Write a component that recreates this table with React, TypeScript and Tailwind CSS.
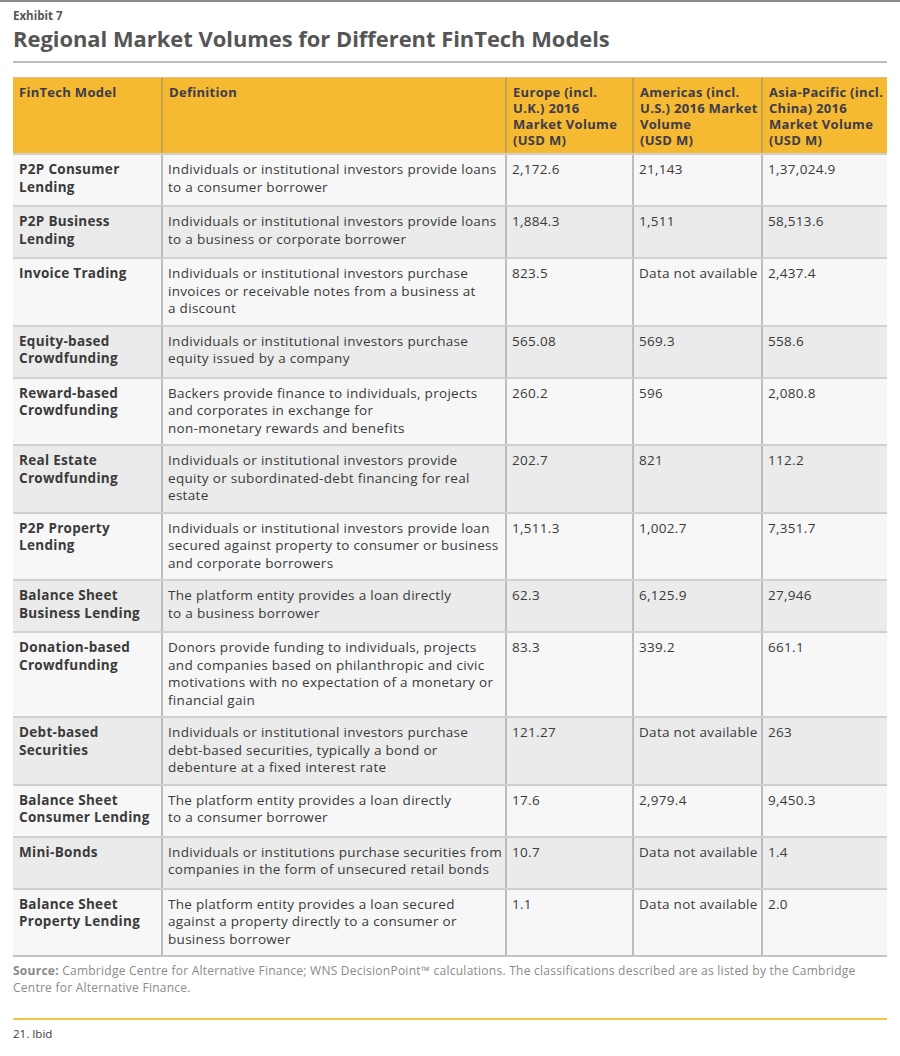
const rows: { model: string[]; def: string[]; eu: string; am: string; ap: string }[] = [
  { model: ["P2P Consumer", "Lending"], def: ["Individuals or institutional investors provide loans", "to a consumer borrower"], eu: "2,172.6", am: "21,143", ap: "1,37,024.9" },
  { model: ["P2P Business", "Lending"], def: ["Individuals or institutional investors provide loans", "to a business or corporate borrower"], eu: "1,884.3", am: "1,511", ap: "58,513.6" },
  { model: ["Invoice Trading"], def: ["Individuals or institutional investors purchase", "invoices or receivable notes from a business at", "a discount"], eu: "823.5", am: "Data not available", ap: "2,437.4" },
  { model: ["Equity-based", "Crowdfunding"], def: ["Individuals or institutional investors purchase", "equity issued by a company"], eu: "565.08", am: "569.3", ap: "558.6" },
  { model: ["Reward-based", "Crowdfunding"], def: ["Backers provide finance to individuals, projects", "and corporates in exchange for", "non-monetary rewards and benefits"], eu: "260.2", am: "596", ap: "2,080.8" },
  { model: ["Real Estate", "Crowdfunding"], def: ["Individuals or institutional investors provide", "equity or subordinated-debt financing for real", "estate"], eu: "202.7", am: "821", ap: "112.2" },
  { model: ["P2P Property", "Lending"], def: ["Individuals or institutional investors provide loan", "secured against property to consumer or business", "and corporate borrowers"], eu: "1,511.3", am: "1,002.7", ap: "7,351.7" },
  { model: ["Balance Sheet", "Business Lending"], def: ["The platform entity provides a loan directly", "to a business borrower"], eu: "62.3", am: "6,125.9", ap: "27,946" },
  { model: ["Donation-based", "Crowdfunding"], def: ["Donors provide funding to individuals, projects", "and companies based on philanthropic and civic", "motivations with no expectation of a monetary or", "financial gain"], eu: "83.3", am: "339.2", ap: "661.1" },
  { model: ["Debt-based", "Securities"], def: ["Individuals or institutional investors purchase", "debt-based securities, typically a bond or", "debenture at a fixed interest rate"], eu: "121.27", am: "Data not available", ap: "263" },
  { model: ["Balance Sheet", "Consumer Lending"], def: ["The platform entity provides a loan directly", "to a consumer borrower"], eu: "17.6", am: "2,979.4", ap: "9,450.3" },
  { model: ["Mini-Bonds"], def: ["Individuals or institutions purchase securities from", "companies in the form of unsecured retail bonds"], eu: "10.7", am: "Data not available", ap: "1.4" },
  { model: ["Balance Sheet", "Property Lending"], def: ["The platform entity provides a loan secured", "against a property directly to a consumer or", "business borrower"], eu: "1.1", am: "Data not available", ap: "2.0" },
];

const headers: string[][] = [
  ["FinTech Model"],
  ["Definition"],
  ["Europe (incl.", "U.K.) 2016", "Market Volume", "(USD M)"],
  ["Americas (incl.", "U.S.) 2016 Market", "Volume", "(USD M)"],
  ["Asia-Pacific (incl.", "China) 2016", "Market Volume", "(USD M)"],
];

const widths = ["w-[148px]", "w-[344px]", "w-[127px]", "w-[129px]", "w-[124px]"];

function Lines({ lines }: { lines: string[] }) {
  return (
    <>
      {lines.map((l, i) => (
        <div key={i} className="whitespace-nowrap">
          {l}
        </div>
      ))}
    </>
  );
}

export default function App() {
  return (
    <div
      className="w-[900px] h-[1056px] bg-white border-t-2 border-[#8c8c8c] text-[#3a3a3a]"
      style={{ fontFamily: '"Open Sans", "Liberation Sans", sans-serif' }}
    >
      <div className="mx-[13px]">
        <div className="pt-[6px] text-[11.5px] leading-[16px] font-bold text-[#555]">Exhibit 7</div>
        <h1 className="mt-[1px] text-[21.9px] font-bold leading-[28px] text-[#555] pb-[8px] border-b-2 border-[#bdbdbd]">
          Regional Market Volumes for Different FinTech Models
        </h1>

        <div className="mt-[14px] text-[13.5px] tracking-[0.3px] leading-[17.5px]">
          {/* header */}
          <div className="flex bg-[#f6b932] border-t border-[#d8c08a] font-bold text-[#3c3c4a] text-[13px] h-[76px]">
            {headers.map((h, i) => (
              <div
                key={i}
                className={`${widths[i]} pl-[6px] pt-[6px] leading-[16px] ${i > 0 ? "border-l-2 border-[#c4a24e]" : ""}`}
              >
                <Lines lines={h} />
              </div>
            ))}
          </div>

          {rows.map((r, idx) => (
            <div
              key={idx}
              className={`flex min-h-[52px] border-t-2 border-[#d0d0d0] ${idx % 2 === 0 ? "bg-[#f7f7f7]" : "bg-[#ebebeb]"}`}
            >
              <div className={`${widths[0]} pl-[6px] pt-[6px] pb-[7px] font-bold`}>
                <Lines lines={r.model} />
              </div>
              <div className={`${widths[1]} pl-[5px] pt-[6px] pb-[7px] border-l-2 border-[#bdbdbd]`}>
                <Lines lines={r.def} />
              </div>
              <div className={`${widths[2]} pl-[5px] pt-[6px] border-l-2 border-[#bdbdbd]`}>{r.eu}</div>
              <div className={`${widths[3]} pl-[5px] pt-[6px] border-l-2 border-[#bdbdbd] whitespace-nowrap`}>{r.am}</div>
              <div className={`${widths[4]} pl-[5px] pt-[6px] border-l-2 border-[#bdbdbd]`}>{r.ap}</div>
            </div>
          ))}
          <div className="border-t-2 border-[#c4c4c4]" />
        </div>

        <p className="mt-[5px] text-[12px] tracking-[0.25px] leading-[17px] text-[#8a8a8a] whitespace-nowrap">
          <span className="font-bold">Source:</span> Cambridge Centre for Alternative Finance; WNS DecisionPoint™
          calculations. The classifications described are as listed by the Cambridge
          <br />
          Centre for Alternative Finance.
        </p>

        <div className="mt-[22px] border-t-2 border-[#f7c342]" />
        <div className="pt-[5px] text-[11.5px] text-[#3a3a3a]">21. Ibid</div>
      </div>
    </div>
  );
}
